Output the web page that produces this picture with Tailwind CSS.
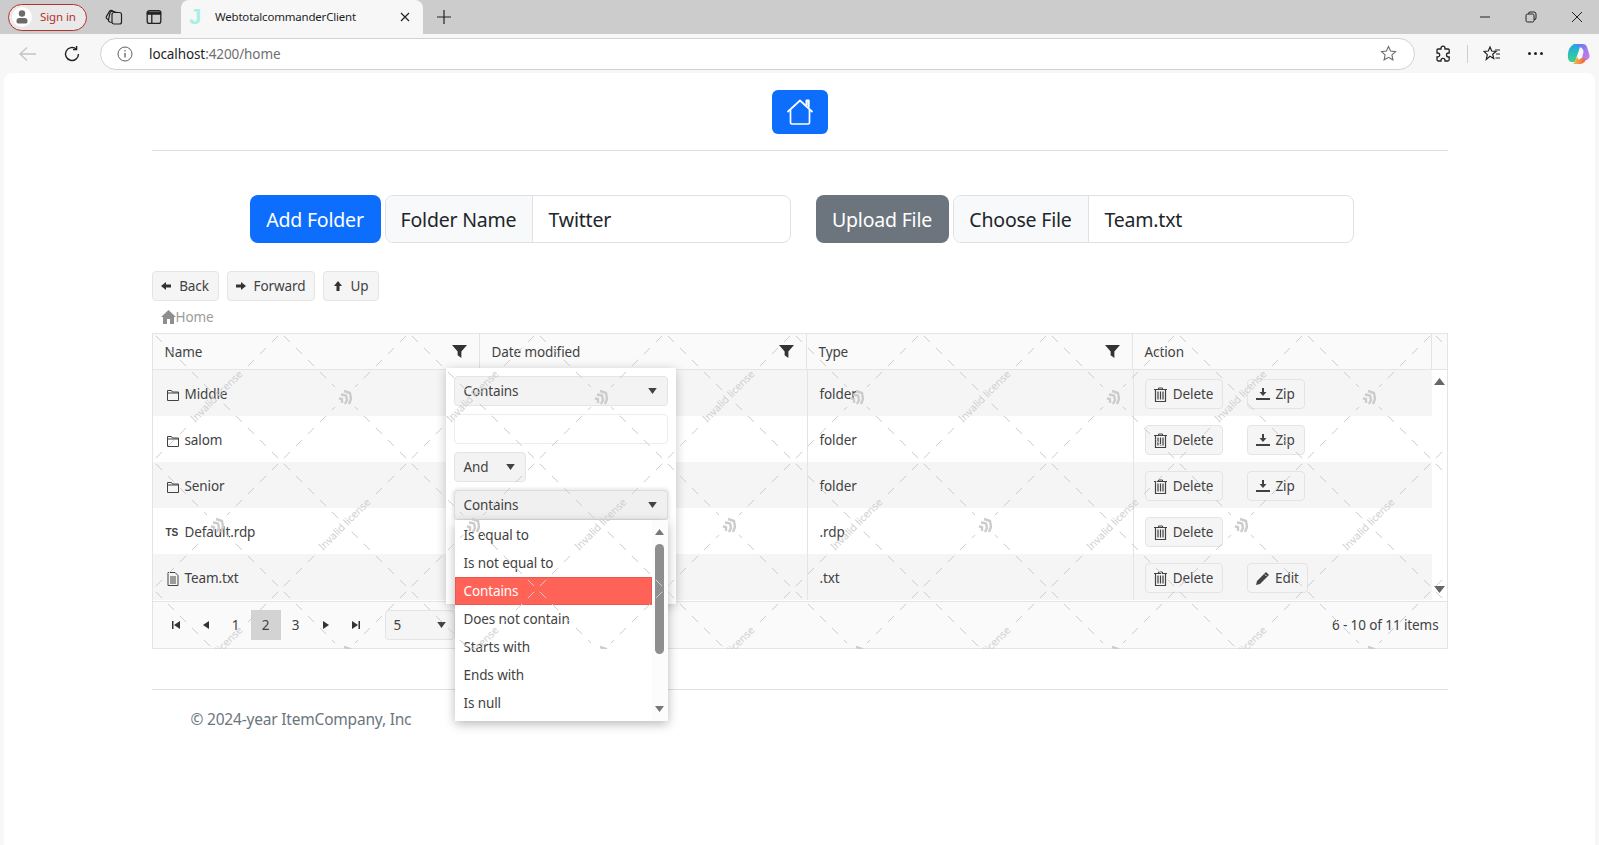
<!DOCTYPE html>
<html lang="en">
<head>
    <meta charset="UTF-8">
    <meta name="viewport" content="width=device-width, initial-scale=1.0">
    <title>WebtotalcommanderClient</title>
    <script src="https://cdn.jsdelivr.net/npm/@tailwindcss/browser@4"></script>
</head>
<body class="h-[845px] overflow-hidden bg-[#f7f7f7] font-['Noto_Sans',sans-serif] text-[13.5px] tracking-[-0.1px] text-[#424242]">
    <!-- tab strip -->
    <div class="flex h-[34px] items-center bg-[#cccccc] pl-[8px]">
        <div class="flex h-[27px] w-[79px] items-center gap-[8px] rounded-full border border-[#b3302c] bg-[#e9e9e9] pl-[3px]">
            <span class="flex h-[20px] w-[20px] items-center justify-center rounded-full bg-white">
                <svg width="16" height="16" viewBox="0 0 16 16" fill="#6b6b6b"><circle cx="8" cy="4.5" r="3.2"/><path d="M2.5 12a3 3 0 0 1 3-3h5a3 3 0 0 1 3 3v1a2 2 0 0 1-2 1.5h-7a2 2 0 0 1-2-1.5z"/></svg>
            </span>
            <span class="text-[11.5px] text-[#b3302c]">Sign in</span>
        </div>
        <svg class="ml-[18px]" width="18" height="18" viewBox="0 0 18 18" fill="none" stroke="#222" stroke-width="1.2"><rect x="7" y="4.5" width="9.5" height="11.5" rx="2"/><path d="M7 14.5 4.8 14A2 2 0 0 1 3.5 11.6L5 5a2 2 0 0 1 2.4-1.5l5 1"/><path d="M4 12 2.2 11a2 2 0 0 1-.7-2.6l3-5A2 2 0 0 1 7 2.6l3 1.6"/></svg>
        <svg class="ml-[23px]" width="16" height="16" viewBox="0 0 16 16" fill="none" stroke="#222" stroke-width="1.3"><rect x="1.2" y="1.6" width="13.6" height="12.8" rx="2.2"/><path d="M1.5 3.2h13V5h-13z" fill="#222"/><path d="M5.8 5v9"/></svg>
        <div class="ml-[19px] flex h-[34px] w-[242px] items-center self-end rounded-t-[8px] bg-[#f7f7f7] pl-[8px] pr-[12px]">
            <span class="w-[26px] font-['Liberation_Sans',sans-serif] text-[22px] font-bold leading-none text-[#a8f0e4]">J</span>
            <span class="flex-1 text-[11.5px] tracking-[-0.2px] text-[#1f1f1f]">WebtotalcommanderClient</span>
            <svg width="12" height="12" viewBox="0 0 12 12" stroke="#222" stroke-width="1.2"><path d="M2 2l8 8M10 2l-8 8"/></svg>
        </div>
        <svg class="ml-[13px]" width="16" height="16" viewBox="0 0 16 16" stroke="#222" stroke-width="1.2"><path d="M8 1v14M1 8h14"/></svg>
        <div class="ml-auto flex items-center">
            <svg width="12" height="12" viewBox="0 0 12 12" stroke="#222"><path d="M1 6h10"/></svg>
            <svg class="ml-[34px]" width="12" height="12" viewBox="0 0 12 12" fill="none" stroke="#222"><rect x="1" y="3" width="8" height="8" rx="1.5"/><path d="M3.500 3V2.500a1.500 1.500 0 0 1 1.500-1.500h4A2 2 0 0 1 11 3v4a1.500 1.500 0 0 1-2 1.400"/></svg>
            <svg class="ml-[34px] mr-[16px]" width="12" height="12" viewBox="0 0 12 12" stroke="#222"><path d="M1 1l10 10M11 1 1 11"/></svg>
        </div>
    </div>

    <!-- address bar -->
    <div class="flex h-[39px] items-center">
        <svg class="ml-[19px]" width="18" height="16" viewBox="0 0 18 16" fill="none" stroke="#c4c4c4" stroke-width="1.3"><path d="M1 8h16M8 1.500 1 8l7 6.500"/></svg>
        <svg class="ml-[26px]" width="18" height="18" viewBox="0 0 18 18" fill="none" stroke="#222" stroke-width="1.4"><path d="M15.500 9A6.500 6.500 0 1 1 13.300 4.100"/><path d="M13.600 1v3.600H10"/></svg>
        <div class="ml-[19px] flex h-[32px] w-[1315px] items-center rounded-full border border-[#d2d2d2] bg-white pl-[16px] pr-[17px]">
            <svg width="16" height="16" viewBox="0 0 16 16" fill="none" stroke="#5f5f5f"><circle cx="8" cy="8" r="7"/><path d="M8 7v4.500M8 4.200v1.300" stroke-width="1.300"/></svg>
            <span class="ml-[16px] pt-[2px] text-[#1f1f1f]">localhost<span class="text-[#6f6f6f]">:4200/home</span></span>
            <svg class="ml-auto" width="17" height="17" viewBox="0 0 17 17" fill="none" stroke="#6b6b6b" stroke-width="1.100"><path d="M8.500 1.500l2.100 4.500 4.900.6-3.600 3.300 1 4.900-4.400-2.500-4.400 2.500 1-4.900L1.500 6.600 6.400 6z"/></svg>
        </div>
        <svg class="ml-[19px]" width="18" height="18" viewBox="0 0 18 18" fill="none" stroke="#222" stroke-width="1.300"><path d="M7 3.200a2 2 0 0 1 4 0V4h3.200a1 1 0 0 1 1 1v3h-.7a2 2 0 0 0 0 4h.7v2.500a1.500 1.500 0 0 1-1.500 1.500H11v-.7a2 2 0 0 0-4 0v.7H4.500A1.500 1.500 0 0 1 3 14.500V12h.7a2 2 0 0 0 0-4H3V5a1 1 0 0 1 1-1h3z"/></svg>
        <div class="ml-[15px] h-[18px] w-px bg-[#cfcfcf]"></div>
        <svg class="ml-[15px]" width="18" height="18" viewBox="0 0 18 18" fill="none" stroke="#222" stroke-width="1.200"><path d="M7 2l1.700 4 4.300.4-3.300 2.800 1 4.200L7 11.200l-3.700 3.200 1-4.800L1 6.400 5.300 6z"/><path d="M12 5h5M13 9h4M12.500 13H17"/></svg>
        <span class="ml-[27px] flex gap-[3px]"><i class="h-[3px] w-[3px] rounded-full bg-[#222]"></i><i class="h-[3px] w-[3px] rounded-full bg-[#222]"></i><i class="h-[3px] w-[3px] rounded-full bg-[#222]"></i></span>
        <svg class="ml-[24px]" width="23" height="22" viewBox="0 0 23 22"><defs><linearGradient id="cpA" x1="0" y1="0" x2="0" y2="1"><stop offset="0" stop-color="#1fa5e8"/><stop offset="1" stop-color="#3fd28c"/></linearGradient><linearGradient id="cpB" x1="0" y1="0" x2="1" y2="1"><stop offset="0" stop-color="#5a7cf0"/><stop offset="1" stop-color="#d77ce8"/></linearGradient><linearGradient id="cpC" x1="0" y1="0" x2="1" y2="0"><stop offset="0" stop-color="#f7c03c"/><stop offset="1" stop-color="#ef5a4c"/></linearGradient></defs><path d="M7 1h7l-3 9-3 9H5Q1 19 .8 13 1 4 7 1z" fill="url(#cpA)"/><path d="M9 1h7q3 0 4 3l2.500 8q.5 4-3 5h-5l2-8q0-4-4-5z" fill="url(#cpB)"/><path d="M6 21h8q4-1 5-5l-5-1-2 2-2-3-2 5z" fill="url(#cpC)"/></svg>
    </div>

    <!-- page -->
    <div class="mx-[4px] h-[772px] rounded-t-[8px] bg-white pt-[17px]">
        <div class="mx-auto w-[1296px]">
            <div class="flex justify-center">
                <button class="flex h-[44px] w-[56px] items-center justify-center rounded-[6px] bg-[#0d6efd]">
                    <svg width="30" height="30" viewBox="0 0 30 30" fill="none" stroke="#fff" stroke-width="1.700" stroke-linejoin="round"><path d="M2.500 15 15 3.500 27.500 15"/><path d="M5.500 13v12.500a1.500 1.500 0 0 0 1.500 1.500h16a1.500 1.500 0 0 0 1.500-1.500V13"/><path d="M21.500 8.500V3.500h2.200v7" stroke-width="2"/></svg>
                </button>
            </div>
            <div class="mt-[16px] h-px bg-[#dcdcdc]"></div>

            <!-- folder and file forms -->
            <div class="mt-[44px] flex pl-[98px] text-[19.5px] tracking-[-0.2px] text-[#212529]">
                <button class="h-[48px] w-[131px] rounded-[8px] bg-[#0d6efd] pt-[2px] text-white">Add Folder</button>
                <div class="ml-[4px] flex h-[48px] w-[406px] overflow-hidden rounded-[8px] border border-[#dee2e6]">
                    <span class="flex w-[147px] items-center justify-center border-r border-[#dee2e6] bg-[#f8f9fa] pt-[2px]">Folder Name</span>
                    <span class="flex items-center pl-[16px] pt-[2px]">Twitter</span>
                </div>
                <button class="ml-[25px] h-[48px] w-[133px] rounded-[8px] bg-[#6c757d] pt-[2px] text-white">Upload File</button>
                <div class="ml-[4px] flex h-[48px] w-[401px] overflow-hidden rounded-[8px] border border-[#dee2e6]">
                    <span class="flex w-[135px] items-center justify-center border-r border-[#dee2e6] bg-[#f8f9fa] pt-[2px]">Choose File</span>
                    <span class="flex items-center pl-[16px] pt-[2px]">Team.txt</span>
                </div>
            </div>

            <!-- navigation -->
            <div class="mt-[28px] flex gap-[8px]">
                <button class="flex h-[30px] w-[67px] items-center justify-center gap-[8px] rounded-[4px] border border-[#e4e4e4] bg-[#f5f5f5]"><svg width="10" height="10" viewBox="0 0 10 10" fill="#333"><path d="M0 5l5-4v2.500h5v3H5V9z"/></svg>Back</button>
                <button class="flex h-[30px] w-[88px] items-center justify-center gap-[8px] rounded-[4px] border border-[#e4e4e4] bg-[#f5f5f5]"><svg width="10" height="10" viewBox="0 0 10 10" fill="#333"><path d="M10 5 5 1v2.500H0v3h5V9z"/></svg>Forward</button>
                <button class="flex h-[30px] w-[56px] items-center justify-center gap-[8px] rounded-[4px] border border-[#e4e4e4] bg-[#f5f5f5]"><svg width="10" height="10" viewBox="0 0 10 10" fill="#333"><path d="M5 0 9 5H6.500v5h-3V5H1z"/></svg>Up</button>
            </div>
            <div class="mt-[5px] flex h-[22px] items-center pl-[9px] text-[#9b9b9b]">
                <svg width="15" height="14" viewBox="0 0 15 14" fill="#8f8f8f"><path d="M7.500 0 15 7h-2v7H9V9H6v5H2V7H0z"/></svg>Home
            </div>

            <!-- grid -->
            <div class="relative mt-[5px] h-[316px] border border-[#e4e4e4]">
                <div class="flex h-[36px] border-b border-[#e4e4e4] bg-[#fafafa]">
                    <div class="flex w-[327px] items-center justify-between border-r border-[#e4e4e4] pl-[12px] pr-[12px]"><span class="pt-[2px]">Name</span><svg width="15" height="15" viewBox="0 0 16 16" fill="#333"><path d="M0 1h16l-6 7v7l-4-3V8z"/></svg></div>
                    <div class="flex w-[327px] items-center justify-between border-r border-[#e4e4e4] pl-[12px] pr-[12px]"><span class="pt-[2px]">Date modified</span><svg width="15" height="15" viewBox="0 0 16 16" fill="#333"><path d="M0 1h16l-6 7v7l-4-3V8z"/></svg></div>
                    <div class="flex w-[326px] items-center justify-between border-r border-[#e4e4e4] pl-[12px] pr-[12px]"><span class="pt-[2px]">Type</span><svg width="15" height="15" viewBox="0 0 16 16" fill="#333"><path d="M0 1h16l-6 7v7l-4-3V8z"/></svg></div>
                    <div class="flex w-[299px] items-center border-r border-[#e4e4e4] pl-[12px] pt-[2px]">Action</div>
                </div>
                <div class="flex h-[231px]">
                    <div id="rows" class="w-[1279px]"></div>
                    <div class="flex w-[15px] flex-col items-center justify-between py-[8px]">
                        <svg width="11" height="7" viewBox="0 0 11 7" fill="#666"><path d="M5.500 0 11 7H0z"/></svg>
                        <svg width="11" height="7" viewBox="0 0 11 7" fill="#666"><path d="M5.500 7 11 0H0z"/></svg>
                    </div>
                </div>
                <div class="flex h-[47px] items-center border-t border-[#e4e4e4] bg-[#fafafa] pl-[8px] pr-[8px]">
                    <span class="flex h-[30px] w-[30px] items-center justify-center"><svg width="10" height="10" viewBox="0 0 10 10" fill="#333"><path d="M1 1h1.500v8H1zM9 1v8L3 5z"/></svg></span>
                    <span class="flex h-[30px] w-[30px] items-center justify-center"><svg width="8" height="10" viewBox="0 0 8 10" fill="#333"><path d="M7 1v8L1 5z"/></svg></span>
                    <span class="flex h-[30px] w-[30px] items-center justify-center">1</span>
                    <span class="flex h-[30px] w-[30px] items-center justify-center bg-[#d3d3d3]">2</span>
                    <span class="flex h-[30px] w-[30px] items-center justify-center">3</span>
                    <span class="flex h-[30px] w-[30px] items-center justify-center"><svg width="8" height="10" viewBox="0 0 8 10" fill="#333"><path d="M1 1v8l6-4z"/></svg></span>
                    <span class="flex h-[30px] w-[30px] items-center justify-center"><svg width="10" height="10" viewBox="0 0 10 10" fill="#333"><path d="M9 1H7.500v8H9zM1 1v8l6-4z"/></svg></span>
                    <div class="ml-[14px] flex h-[30px] w-[70px] items-center justify-between rounded-[4px] border border-[#e4e4e4] bg-[#f5f5f5] pl-[8px] pr-[8px]">5<svg width="9" height="6" viewBox="0 0 10 7" fill="#424242"><path d="M0 0h10L5 7z"/></svg></div>
                    <span class="ml-auto">6 - 10 of 11 items</span>
                </div>

                <!-- filter popup -->
                <div class="absolute left-[293px] top-[34px] z-10 h-[236px] w-[230px] bg-white p-[8px] shadow-[0_2px_10px_rgba(0,0,0,0.22)]">
                    <div class="flex h-[30px] w-[214px] items-center justify-between rounded-[4px] border border-[#e4e4e4] bg-[#f3f3f3] pl-[9px] pr-[10px]">Contains<svg width="9" height="6" viewBox="0 0 10 7" fill="#424242"><path d="M0 0h10L5 7z"/></svg></div>
                    <div class="mt-[8px] h-[30px] w-[214px] rounded-[4px] border border-[#ececec] bg-white"></div>
                    <div class="mt-[8px] flex h-[30px] w-[72px] items-center justify-between rounded-[4px] border border-[#e4e4e4] bg-[#f3f3f3] pl-[9px] pr-[10px]">And<svg width="9" height="6" viewBox="0 0 10 7" fill="#424242"><path d="M0 0h10L5 7z"/></svg></div>
                    <div class="mt-[8px] flex h-[30px] w-[214px] items-center justify-between rounded-[4px] border border-[#dcdcdc] bg-[#f0f0f0] pl-[9px] pr-[10px] shadow-[0_0_3px_2px_rgba(0,0,0,0.08)]">Contains<svg width="9" height="6" viewBox="0 0 10 7" fill="#424242"><path d="M0 0h10L5 7z"/></svg></div>
                </div>
                <!-- operator list -->
                <div class="absolute left-[302px] top-[186px] z-20 flex h-[201px] w-[213px] bg-white shadow-[0_3px_10px_rgba(0,0,0,0.28)]">
                    <div class="w-[197px] pt-[1px]">
                        <div class="flex h-[28px] items-center pl-[9px]">Is equal to</div>
                        <div class="flex h-[28px] items-center pl-[9px]">Is not equal to</div>
                        <div class="flex h-[28px] items-center border border-[#e9594f] bg-[#ff6358] pl-[8px] text-white">Contains</div>
                        <div class="flex h-[28px] items-center pl-[9px]">Does not contain</div>
                        <div class="flex h-[28px] items-center pl-[9px]">Starts with</div>
                        <div class="flex h-[28px] items-center pl-[9px]">Ends with</div>
                        <div class="flex h-[28px] items-center pl-[9px]">Is null</div>
                    </div>
                    <div class="relative w-[16px] bg-[#fcfcfc]">
                        <svg class="absolute left-[3px] top-[9px]" width="9" height="6" viewBox="0 0 9 6" fill="#777"><path d="M4.500 0 9 6H0z"/></svg>
                        <div class="absolute left-[3px] top-[24px] h-[110px] w-[9px] rounded-full bg-[#8e8e8e]"></div>
                        <svg class="absolute bottom-[9px] left-[3px]" width="9" height="6" viewBox="0 0 9 6" fill="#777"><path d="M4.500 6 9 0H0z"/></svg>
                    </div>
                </div>
                <!-- licence watermark, over everything in the grid -->
                <svg id="mark" class="pointer-events-none absolute -left-px -top-px z-30" width="1296" height="316"></svg>
            </div>

            <div class="mt-[40px] h-px bg-[#e0e0e0]"></div>
            <footer class="pl-[39px] pt-[18px] text-[15.5px] tracking-[-0.2px] text-[#6c757d]">© 2024-year ItemCompany, Inc</footer>
        </div>
    </div>

    <script>
        const folderIcon = `<svg class="mt-[1px]" width="14" height="14" viewBox="0 0 14 14" fill="none" stroke="#424242"><path d="M1.500 12.500v-10h4l1 1.500h6v8.500zM1.500 5h11"/></svg>`;
        const tsIcon = `<span class="mt-[1px] w-[14px] font-['Liberation_Sans',sans-serif] text-[10px] font-bold leading-none">TS</span>`;
        const fileIcon = `<svg class="mt-[1px]" width="14" height="14" viewBox="0 0 14 14" fill="none" stroke="#424242"><path d="M2 .5h7l3 3v10H2zM4 5h6M4 7h6M4 9h6M4 11h6"/></svg>`;
        const trashIcon = `<svg width="13" height="15" viewBox="0 0 13 15" fill="none" stroke="#424242"><path d="M0 2.500h13M4.500 2.500V1h4v1.500" /><path d="M1.500 2.500v12h10v-12M4 4.500v8M6.500 4.500v8M9 4.500v8" stroke-width="1.200"/></svg>`;
        const zipIcon = `<svg width="14" height="14" viewBox="0 0 14 14" fill="#424242"><path d="M6 1h2v4h2.500L7 9 3.500 5H6zM0 11h14v2H0z"/></svg>`;
        const editIcon = `<svg width="15" height="15" viewBox="0 0 15 15" fill="#424242"><path d="M11 1l3 3-9 9-4 1 1-4z"/><path d="M10 3.500l1.500 1.500" stroke="#f5f5f5"/></svg>`;

        const files = [
            { icon: folderIcon, name: "Middle", type: "folder", extra: "zip" },
            { icon: folderIcon, name: "salom", type: "folder", extra: "zip" },
            { icon: folderIcon, name: "Senior", type: "folder", extra: "zip" },
            { icon: tsIcon, name: "Default.rdp", type: ".rdp", extra: "" },
            { icon: fileIcon, name: "Team.txt", type: ".txt", extra: "edit" }
        ];

        const rowsHtml = files.map((file, index) => {
            const stripe = index % 2 === 0 ? "bg-[#f5f5f5]" : "bg-white";
            let extraBtn = "";
            if (file.extra === "zip") {
                extraBtn = `<button class="ml-[24px] flex h-[30px] w-[58px] items-center justify-center gap-[5px] rounded-[4px] border border-[#e4e4e4] bg-[#f5f5f5]">${zipIcon}Zip</button>`;
            } else if (file.extra === "edit") {
                extraBtn = `<button class="ml-[24px] flex h-[30px] w-[61px] items-center justify-center gap-[5px] rounded-[4px] border border-[#e4e4e4] bg-[#f5f5f5]">${editIcon}Edit</button>`;
            }
            return `<div class="flex h-[46px] ${stripe}">
                <div class="flex w-[327px] items-center gap-[5px] pl-[13px] pt-[2px]">${file.icon}${file.name}</div>
                <div class="w-[327px]"></div>
                <div class="flex w-[326px] items-center border-l border-[#e4e4e4] pl-[12px] pt-[2px]">${file.type}</div>
                <div class="flex w-[299px] items-center border-l border-[#e4e4e4] pl-[11px] pt-[2px]">
                    <button class="flex h-[30px] w-[78px] items-center justify-center gap-[6px] rounded-[4px] border border-[#e4e4e4] bg-[#f5f5f5]">${trashIcon}Delete</button>
                    ${extraBtn}
                </div>
            </div>`;
        }).join("");
        document.getElementById("rows").innerHTML = rowsHtml;

        // watermark lattice: logos and texts alternate every 128px, joined by dashed diagonals
        function dashedLine(x1, y1, x2, y2, trim) {
            const len = Math.hypot(x2 - x1, y2 - y1);
            const ux = (x2 - x1) / len, uy = (y2 - y1) / len;
            const inner = len - trim * 2;
            const offset = 13 - (inner / 2) % 17;
            return `<line x1="${x1 + ux * trim}" y1="${y1 + uy * trim}" x2="${x2 - ux * trim}" y2="${y2 - uy * trim}" stroke="#cdcdcd" stroke-dasharray="9 8" stroke-dashoffset="${offset}"/>`;
        }

        let markHtml = "";
        for (let i = -6; i <= 6; i++) {
            for (let j = -1; j <= 3; j++) {
                const x = 705 + 128 * i, y = 64 + 128 * j;
                const isLogo = (i + j) % 2 === 0;
                markHtml += dashedLine(x, y, x + 128, y + 128, isLogo ? 14 : 6);
                markHtml += dashedLine(x, y, x + 128, y - 128, isLogo ? 14 : 42);
                const onCanvas = x > -20 && x < 1316 && y > -20 && y < 330;
                if (!onCanvas) continue;
                if (isLogo) {
                    markHtml += `<g transform="translate(${x} ${y})" fill="none" stroke="#cccccc" stroke-width="2.400" stroke-linejoin="round"><path d="M-1 -6 L5 -4 L6 2 L4 7"/><path d="M-4 -2.500 L1 -1.500 L2 3 L0 7"/><path d="M-6 1.500 L-3 2 L-3 6"/></g>`;
                } else {
                    markHtml += `<text transform="translate(${x} ${y}) rotate(-45)" text-anchor="middle" dominant-baseline="middle" font-size="10.500" fill="#cfcfcf">Invalid license</text>`;
                }
            }
        }
        document.getElementById("mark").innerHTML = markHtml;
    </script>
</body>
</html>
